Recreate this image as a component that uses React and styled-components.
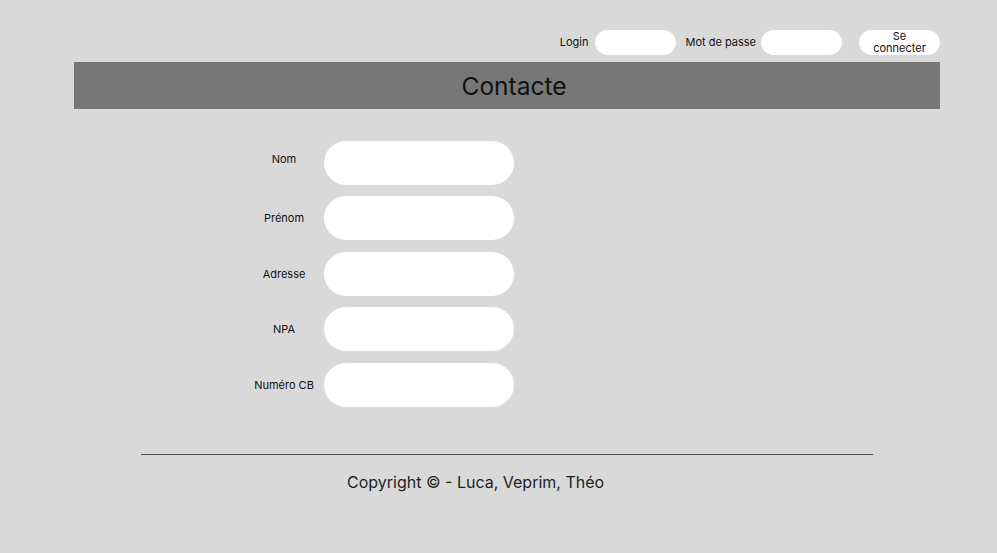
import React from "react";
import styled, { createGlobalStyle } from "styled-components";

const GlobalStyle = createGlobalStyle`
  html, body {
    margin: 0;
    padding: 0;
    background-color: #d9d9d9;
    font-family: Inter, "Liberation Sans", sans-serif;
    color: #111;
  }
`;

const Page = styled.div`
  width: 997px;
  height: 553px;
  padding: 29px 0 0 74px;
  box-sizing: border-box;
`;

const Container = styled.div`
  width: 866px;
`;

const LoginBar = styled.div`
  display: flex;
  justify-content: flex-end;
  align-items: center;
  height: 26px;
  margin-bottom: 7px;
`;

const BarLabel = styled.span`
  font-size: 11px;
  margin-right: ${(props) => props.gap || 6}px;
`;

const BarInput = styled.input`
  width: 81px;
  height: 25px;
  border: none;
  border-radius: 13px;
  background-color: white;
  padding: 0 10px;
  box-sizing: border-box;
  margin-right: ${(props) => props.gap || 9}px;
  outline: none;
`;

const ConnectButton = styled.button`
  width: 81px;
  height: 25px;
  border: none;
  border-radius: 13px;
  background-color: white;
  font-family: inherit;
  font-size: 11px;
  line-height: 12.5px;
  color: #111;
  padding: 0;
  display: flex;
  flex-direction: column;
  align-items: center;
  justify-content: center;
`;

const Banner = styled.div`
  height: 47px;
  background-color: #777777;
  display: flex;
  align-items: center;
  justify-content: center;
  padding-left: 14px;

  h1 {
    margin: 0;
    font-size: 24.5px;
    font-weight: 400;
    color: #111;
  }
`;

const Form = styled.form`
  display: grid;
  grid-template-columns: 80px 190px;
  row-gap: 11.5px;
  margin: 31.5px 0 0 170px;
  align-items: center;
`;

const FieldLabel = styled.label`
  font-size: 11px;
  text-align: center;
  padding-bottom: ${(props) => props.raise || 0}px;
`;

const FieldInput = styled.input`
  height: 44px;
  border: none;
  border-radius: 22px;
  background-color: white;
  padding: 0 16px;
  box-sizing: border-box;
  outline: none;
`;

const Footer = styled.footer`
  margin: 47px 0 0 67px;
  width: 732px;
`;

const Rule = styled.hr`
  margin: 0;
  border: none;
  height: 1.3px;
  background-color: #4a4a4a;
`;

const Copyright = styled.p`
  margin: 17px 0 0 206px;
  font-size: 16px;
  color: #222;
`;

const fields = [
  { label: "Nom", raise: 8 },
  { label: "Prénom" },
  { label: "Adresse" },
  { label: "NPA" },
  { label: "Numéro CB" },
];

function App() {
  return (
    <>
      <GlobalStyle />
      <Page>
        <Container>
          <LoginBar>
            <BarLabel gap={7}>Login</BarLabel>
            <BarInput gap={9} />
            <BarLabel gap={5}>Mot de passe</BarLabel>
            <BarInput gap={17} type="password" />
            <ConnectButton>
              <span>Se</span>
              <span>connecter</span>
            </ConnectButton>
          </LoginBar>
          <Banner>
            <h1>Contacte</h1>
          </Banner>
          <Form>
            {fields.map((field) => (
              <React.Fragment key={field.label}>
                <FieldLabel raise={field.raise}>{field.label}</FieldLabel>
                <FieldInput />
              </React.Fragment>
            ))}
          </Form>
          <Footer>
            <Rule />
            <Copyright>Copyright © - Luca, Veprim, Théo</Copyright>
          </Footer>
        </Container>
      </Page>
    </>
  );
}

export default App;
